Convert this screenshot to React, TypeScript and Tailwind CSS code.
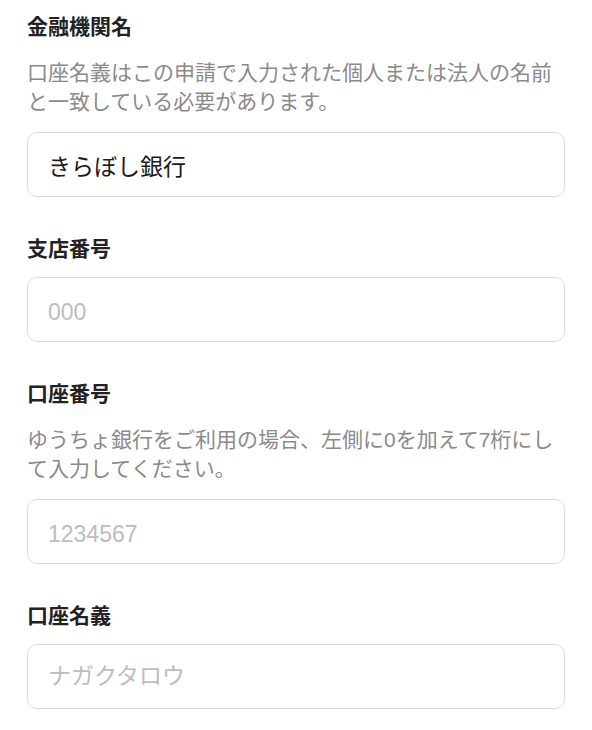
import React from 'react';

interface Field {
  label: string;
  note?: string;
  value?: string;
  placeholder: string;
  numeric?: boolean;
}

const fields: Field[] = [
  {
    label: '金融機関名',
    note: '口座名義はこの申請で入力された個人または法人の名前と一致している必要があります。',
    value: 'きらぼし銀行',
    placeholder: '',
  },
  { label: '支店番号', placeholder: '000', numeric: true },
  {
    label: '口座番号',
    note: 'ゆうちょ銀行をご利用の場合、左側に0を加えて7桁にして入力してください。',
    placeholder: '1234567',
    numeric: true,
  },
  { label: '口座名義', placeholder: 'ナガクタロウ' },
];

export default function App() {
  return (
    <div
      className="min-h-screen bg-white px-[27px] pt-[13px]"
      style={{ fontFamily: '"Liberation Sans", "Noto Sans CJK JP", sans-serif' }}
    >
      {fields.map((f, i) => (
        <div key={f.label} className={i === 0 ? '' : 'mt-[38px]'}>
          <label className="block text-[21px] font-bold leading-[28px] text-[#222]">{f.label}</label>
          {f.note && (
            <p className="mt-[17px] text-[21px] leading-[29px] text-[#8a8a8a]">{f.note}</p>
          )}
          <input
            readOnly
            defaultValue={f.value}
            placeholder={f.placeholder}
            className={`${f.note ? 'mt-4' : 'mt-[14px]'} ${f.numeric ? 'pt-[6px]' : ''} block h-[65px] w-full rounded-[10px] border border-[#dcdcdc] bg-white px-5 text-[23px] text-[#1a1a1a] outline-none placeholder:text-[#bdbdbd]`}
          />
        </div>
      ))}
    </div>
  );
}
